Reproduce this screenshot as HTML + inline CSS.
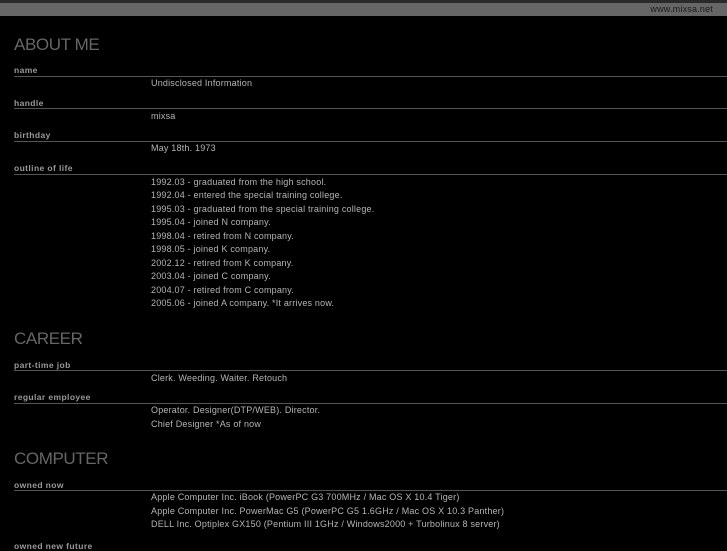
<!DOCTYPE html>
<html><head><meta charset="utf-8"><style>
*{margin:0;padding:0}
body{width:727px;height:545px;background:#000;position:relative;overflow:hidden;font-family:"Liberation Sans",Arial,sans-serif}
.top{position:absolute;left:0;top:0;width:727px;height:3px;background:#2a2a2a}
.bar{position:absolute;left:0;top:3px;width:727px;height:13px;background:#666}
.site{position:absolute;right:14px;top:4px;font-size:9px;color:#1a1a1a;letter-spacing:0.2px;line-height:11px}
.h{position:absolute;left:14px;font-size:17px;color:#666;letter-spacing:-0.4px;line-height:20px}
.l{position:absolute;left:14px;font-size:8.5px;font-weight:bold;color:#999;letter-spacing:0.4px;line-height:10px}
.ln{position:absolute;left:14px;right:0;height:1px;background:#555}
.v{position:absolute;left:151px;font-size:9px;color:#b5b5b5;letter-spacing:0.2px;line-height:11px;white-space:nowrap;margin-top:1.5px}
</style></head><body>
<div class="top"></div><div class="bar"></div><div class="site">www.mixsa.net</div>

<div class="h" style="top:35px">ABOUT ME</div>
<div class="l" style="top:65px">name</div><div class="ln" style="top:76px"></div>
<div class="v" style="top:76px">Undisclosed Information</div>
<div class="l" style="top:98px">handle</div><div class="ln" style="top:108px"></div>
<div class="v" style="top:109px">mixsa</div>
<div class="l" style="top:130px">birthday</div><div class="ln" style="top:141px"></div>
<div class="v" style="top:141px">May 18th. 1973</div>
<div class="l" style="top:163px">outline of life</div><div class="ln" style="top:174px"></div>
<div class="v" style="top:175px">1992.03 - graduated from the high school.</div>
<div class="v" style="top:188.5px">1992.04 - entered the special training college.</div>
<div class="v" style="top:202px">1995.03 - graduated from the special training college.</div>
<div class="v" style="top:215.5px">1995.04 - joined N company.</div>
<div class="v" style="top:229px">1998.04 - retired from N company.</div>
<div class="v" style="top:242.5px">1998.05 - joined K company.</div>
<div class="v" style="top:256px">2002.12 - retired from K company.</div>
<div class="v" style="top:269.5px">2003.04 - joined C company.</div>
<div class="v" style="top:283px">2004.07 - retired from C company.</div>
<div class="v" style="top:296.5px">2005.06 - joined A company. *It arrives now.</div>

<div class="h" style="top:329px">CAREER</div>
<div class="l" style="top:360px">part-time job</div><div class="ln" style="top:370px"></div>
<div class="v" style="top:371px">Clerk. Weeding. Waiter. Retouch</div>
<div class="l" style="top:392px">regular employee</div><div class="ln" style="top:403px"></div>
<div class="v" style="top:403px">Operator. Designer(DTP/WEB). Director.</div>
<div class="v" style="top:417px">Chief Designer *As of now</div>

<div class="h" style="top:449px">COMPUTER</div>
<div class="l" style="top:480px">owned now</div><div class="ln" style="top:490px"></div>
<div class="v" style="top:490px">Apple Computer Inc. iBook (PowerPC G3 700MHz / Mac OS X 10.4 Tiger)</div>
<div class="v" style="top:504px">Apple Computer Inc. PowerMac G5 (PowerPC G5 1.6GHz / Mac OS X 10.3 Panther)</div>
<div class="v" style="top:517px">DELL Inc. Optiplex GX150 (Pentium III 1GHz / Windows2000 + Turbolinux 8 server)</div>
<div class="l" style="top:541px">owned new future</div>
</body></html>
